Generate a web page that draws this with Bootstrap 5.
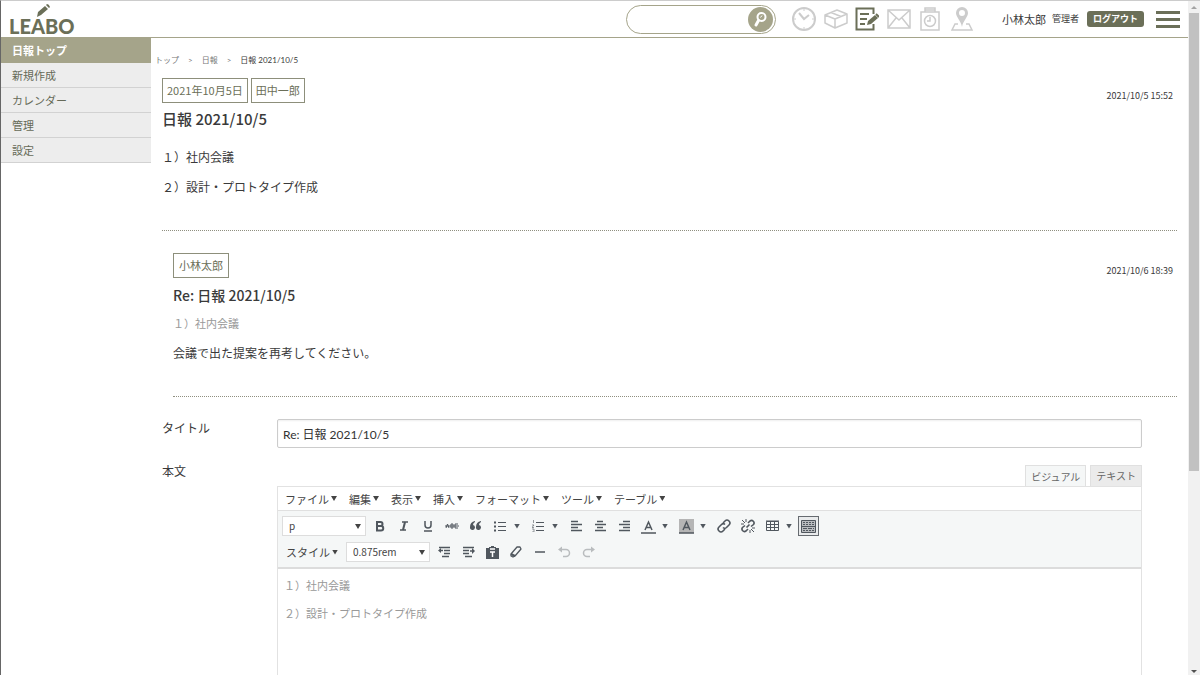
<!DOCTYPE html>
<html lang="ja">
<head>
<meta charset="utf-8">
<meta name="viewport" content="width=device-width, initial-scale=1">
<title>LEABO 日報</title>
<link href="https://cdn.jsdelivr.net/npm/bootstrap@5.3.0/dist/css/bootstrap.min.css" rel="stylesheet">
<style>
:root{--olive:#6b6f58;--sand:#a5a48a;--ink:#3a3a3a;--tool:#50575e}
body{font-family:"Noto Sans CJK JP",sans-serif;font-size:12px;line-height:18px;color:var(--ink);border-left:1px solid #666;border-top:1px solid #ccc}
svg{display:block}
.topbar{border-bottom:1px solid var(--sand);height:37px;padding:0 8px}
.brand{font:900 20px/20px Lato,sans-serif;color:var(--olive);position:relative;align-self:flex-end;padding-bottom:1px}
.brand svg{position:absolute;left:27px;top:-12px}
.searchbox{width:150px;height:29px;border:1px solid var(--sand);border-radius:15px;padding:0 2px 0 12px}
.searchbox input{min-width:0;border:0;outline:0;background:none}
.searchbox button{width:25px;height:25px;background:var(--sand);color:#fff}
.apps{width:182px;color:#ccc}
.apps .on{color:var(--olive)}
.apps a{color:inherit}
.username{font-size:11px;margin:0 6px 0 12px}
.role{font-size:9px}
.logout{font-size:9px;font-weight:700;line-height:16px;color:#fff;background:var(--olive);border-radius:3px;padding:0 6px}
.burger{margin-left:12px}
.burger span{display:block;width:24px;height:3px;background:var(--olive)}
.side{width:150px}
.side a{height:25px;line-height:24px;font-size:11px;padding-left:11px;color:#666a58;background:#ededed;border-bottom:1px solid #d2d2d2;text-decoration:none;display:block}
.side a.on{background:var(--sand);color:#fff;font-weight:700;border-color:var(--sand)}
.crumbs{font-family:Lato,"Noto Sans CJK JP",sans-serif;font-size:8px;line-height:16px;margin:14px 0 10px 4px;gap:9px}
.crumbs a,.crumbs .sep{color:#777;text-decoration:none}
.post{margin:-3px 11px 0;padding-bottom:22px;border-bottom:1px dotted #8f8f80}
.reply{margin:0 11px 22px 22px;padding-top:19px}
.chip{font-size:11px;line-height:23px;border:1px solid #8d8f7b;color:var(--olive);padding:0 5px}
.chips{gap:3px}
.chips .chip{padding:0 4px}
.stamp{font-size:9px;padding-right:4px}
.post h1{font-size:15px;line-height:22px;font-weight:500;margin:3px 0 18px}
.post h2{font-size:14px;line-height:22px;font-weight:500;margin:4px 0 8px}
.post p{margin:0 0 12px}
.post .quoted{font-size:11px;color:#999}
.field{margin-left:11px;margin-right:46px}
.field label,.field .lab{width:115px;flex:none}
.bodyrow{padding-top:14px}
.tabs-row{padding-top:3px;gap:4px}
.titlebox{font-family:Lato,"Noto Sans CJK JP",sans-serif;font-size:12px;line-height:18px;height:29px;padding:0 5px;border:1px solid #ccc;border-radius:2px;color:#333;box-shadow:inset 0 1px 2px #0001}
.tabbtn{font-size:10px;line-height:20px;height:21px;padding:0 5px;color:#666;background:#ebebeb;border:1px solid #e0e0e0;border-bottom:0}
.tabbtn.on{background:#f5f7f7;height:22px;margin-bottom:-1px}
.editor{border:1px solid #e2e2e2;border-bottom:0}
.menus{height:23px;padding-left:7px;gap:12px}
.menus button,.stylebtn{font-size:11px;line-height:18px;color:#444;gap:2px}
.tools{background:#f5f7f7;border-top:1px solid #e0e0e0;border-bottom:2px solid #dcdcdc;padding:4px;gap:4px;color:var(--tool)}
.tools .row1 select{margin-right:2px}
.tools .row2 select{margin-right:2px}
.tools select{width:84px;height:20px;line-height:18px;font-size:10px;padding:0 6px;border:1px solid #ddd;border-radius:0;color:#444;background:#fff url("data:image/svg+xml,%3Csvg xmlns='http://www.w3.org/2000/svg' width='6' height='5'%3E%3Cpath d='M0 0h6L3 5z' fill='%23444'/%3E%3C/svg%3E") no-repeat right 4px center;appearance:none}
.tri{width:6px;height:5px;background:currentColor;clip-path:polygon(0 0,100% 0,50% 100%)}
.tool,.drop,.menus button,.stylebtn,.burger,.searchbox button,.logout{border:0}
.tool,.drop,.menus button,.stylebtn,.burger{background:none;padding:0}
.tool{width:24px;height:22px;color:inherit;display:flex;align-items:center;justify-content:center}
.drop{width:14px;height:22px;padding-left:2px;color:inherit;display:flex;align-items:center}
.tool.pressed{width:21px;height:20px;border:1px solid #666b70;background:#e9ebec}
.tool.off{color:#b9bcbe}
.doc{padding:7px 6px;font-size:11px;color:#999}
.doc p{margin:0 0 10px}
.scroller{width:12px;background:#f1f1f1;color:#555}
.scroller .thumb{height:68%;width:10px;background:#c1c1c1}
</style>
</head>
<body class="d-flex vh-100 overflow-hidden">
<div class="flex-grow-1 d-flex flex-column overflow-hidden">
<header class="topbar d-flex align-items-center flex-shrink-0">
  <a href="#" class="brand text-decoration-none me-auto">LEABO<svg width="14" height="13" viewBox="0 0 14 13"><path d="M1 13l1-5 7-6 3 3-7 6zM10 1l1-1q2 0 3 3l-1 1z" fill="currentColor"/></svg></a>
  <form class="searchbox d-flex align-items-center">
    <input type="search" aria-label="検索" class="flex-grow-1">
    <button type="button" aria-label="検索する" class="rounded-circle d-flex align-items-center justify-content-center flex-shrink-0 p-0"><svg width="16" height="17" viewBox="0 0 16 17" fill="none" stroke="currentColor"><circle cx="9.500" cy="6" r="4" stroke-width="2"/><path d="M6.500 9.500L4 14" stroke-width="3" stroke-linecap="round"/><path d="M8.500 6.500l1.500-2"/></svg></button>
  </form>
  <nav class="apps d-flex justify-content-between align-items-center mx-3" aria-label="アプリ">
    <a href="#" aria-label="時計"><svg width="24" height="24" viewBox="0 0 24 24" fill="none" stroke="currentColor" stroke-width="2"><circle cx="12" cy="12" r="11"/><path d="M7 6l5 6 5-4"/><path d="M12 2v2M12 20v2M2 12h2M20 12h2" stroke-width="1"/></svg></a>
    <a href="#" aria-label="箱"><svg width="24" height="24" viewBox="0 0 24 24" fill="none" stroke="currentColor" stroke-width="1.500" stroke-linejoin="round"><path d="M1 8l12-5 10 4v9l-12 5-10-5zM1 8l10 4 12-5M11 12v9M7 5.500l10 4"/></svg></a>
    <a href="#" aria-label="日報" class="on"><svg width="24" height="24" viewBox="0 0 24 24" fill="none" stroke="currentColor" stroke-width="2"><path d="M18.500 7V1.500h-17v21h17V17M5 7h9M5 12h7M5 17h5"/><path d="M12 18l1-4 7-6 3 3-7 6z" fill="currentColor" stroke="none"/><path d="M21 7l3 3"/></svg></a>
    <a href="#" aria-label="メール"><svg width="24" height="24" viewBox="0 0 24 24" fill="none" stroke="currentColor" stroke-width="1.500"><path d="M1 3h22v18H1zM1 3l11 10L23 3M1 21l8-10M23 21l-8-10"/></svg></a>
    <a href="#" aria-label="タイムカード"><svg width="24" height="24" viewBox="0 0 24 24" fill="none" stroke="currentColor" stroke-width="1.500"><path d="M3 5h18v18H3zM7 5V1h10v4M7 3h10"/><circle cx="12" cy="14" r="5.500"/><path d="M12 10v4H9"/></svg></a>
    <a href="#" aria-label="地図"><svg width="24" height="24" viewBox="0 0 24 24" fill="none" stroke="currentColor" stroke-width="1.500"><path d="M8 17H5l-3 6h20l-3-6h-3"/><path fill="currentColor" stroke="none" fill-rule="evenodd" d="M12 0a6 6 0 0 1 6 6c0 4-5 8-6 14-1-6-6-10-6-14a6 6 0 0 1 6-6zm0 3a3 3 0 1 0 0 6 3 3 0 0 0 0-6z"/></svg></a>
  </nav>
  <span class="username">小林太郎</span>
  <span class="role me-2">管理者</span>
  <button type="button" class="logout">ログアウト</button>
  <button type="button" class="burger d-flex flex-column gap-1" aria-label="メニュー"><span></span><span></span><span></span></button>
</header>
<div class="d-flex flex-grow-1 overflow-hidden">
  <nav class="side flex-shrink-0">
    <a href="#" class="on">日報トップ</a><a href="#">新規作成</a><a href="#">カレンダー</a><a href="#">管理</a><a href="#">設定</a>
  </nav>
  <main class="flex-grow-1 d-flex flex-column overflow-hidden">
    <nav class="crumbs d-flex" aria-label="パンくず"><a href="#">トップ</a><span class="sep">&gt;</span><a href="#">日報</a><span class="sep">&gt;</span><span>日報 2021/10/5</span></nav>
    <article class="post">
      <div class="chips d-flex align-items-center">
        <span class="chip">2021年10月5日</span><span class="chip">田中一郎</span>
        <time class="stamp ms-auto mt-2 pt-1">2021/10/5 15:52</time>
      </div>
      <h1>日報 2021/10/5</h1>
      <div><p>１）社内会議</p><p>２）設計・プロトタイプ作成</p></div>
    </article>
    <article class="post reply">
      <div class="d-flex align-items-center">
        <span class="chip">小林太郎</span>
        <time class="stamp ms-auto mt-2 pt-1">2021/10/6 18:39</time>
      </div>
      <h2>Re: 日報 2021/10/5</h2>
      <div><p class="quoted">１）社内会議</p><p>会議で出た提案を再考してください。</p></div>
    </article>
    <div class="field d-flex">
      <label for="ttl">タイトル</label>
      <input id="ttl" type="text" class="titlebox flex-grow-1" value="Re: 日報 2021/10/5">
    </div>
    <div class="field bodyrow d-flex flex-grow-1">
      <span class="lab">本文</span>
      <div class="flex-grow-1 d-flex flex-column">
        <div class="tabs-row d-flex justify-content-end"><button type="button" class="tabbtn on">ビジュアル</button><button type="button" class="tabbtn">テキスト</button></div>
        <div class="editor flex-grow-1">
          <div class="menus d-flex align-items-center">
            <button type="button" class="d-flex align-items-center">ファイル<i class="tri"></i></button>
            <button type="button" class="d-flex align-items-center">編集<i class="tri"></i></button>
            <button type="button" class="d-flex align-items-center">表示<i class="tri"></i></button>
            <button type="button" class="d-flex align-items-center">挿入<i class="tri"></i></button>
            <button type="button" class="d-flex align-items-center">フォーマット<i class="tri"></i></button>
            <button type="button" class="d-flex align-items-center">ツール<i class="tri"></i></button>
            <button type="button" class="d-flex align-items-center">テーブル<i class="tri"></i></button>
          </div>
          <div class="tools d-flex flex-column">
            <div class="row1 d-flex align-items-center">
              <select aria-label="ブロック"><option>p</option></select>
              <button type="button" class="tool" aria-label="太字"><svg width="12" height="12" viewBox="0 0 12 12" fill="none" stroke="currentColor" stroke-width="2"><path d="M3 2h3.500a2 2 0 0 1 0 4H3h4a2 2 0 0 1 0 4.500H3z"/></svg></button>
              <button type="button" class="tool" aria-label="斜体"><svg width="12" height="12" viewBox="0 0 12 12" fill="none" stroke="currentColor" stroke-width="1.500"><path d="M4 2h6M2 10h6"/><path d="M7 2L5 10" stroke-width="2"/></svg></button>
              <button type="button" class="tool" aria-label="下線"><svg width="12" height="12" viewBox="0 0 12 12" fill="none" stroke="currentColor" stroke-width="1.500"><path d="M3 1v4a3 3 0 0 0 6 0V1M2 11h8"/></svg></button>
              <button type="button" class="tool" aria-label="取り消し線"><svg width="14" height="12" viewBox="0 0 14 12" fill="none" stroke="currentColor"><path d="M1 8l1.500-4L4 8M6 4v4h2V4zM13 4h-3v4h3M0 6h14"/></svg></button>
              <button type="button" class="tool" aria-label="引用"><svg width="12" height="10" viewBox="0 0 12 10" fill="currentColor"><path d="M5 0Q0 1 0 6a2.500 2.500 0 1 0 3-2q0-2 2-3zm6 0Q6 1 6 6a2.500 2.500 0 1 0 3-2q0-2 2-3z"/></svg></button>
              <button type="button" class="tool" aria-label="箇条書き"><svg width="12" height="12" viewBox="0 0 12 12" stroke="currentColor"><path d="M4 2.500h8M4 6.500h8M4 10.500h8"/><path d="M0 2.500h2M0 6.500h2M0 10.500h2" stroke-width="2"/></svg></button>
              <button type="button" class="drop" aria-label="箇条書きの種類"><i class="tri"></i></button>
              <button type="button" class="tool" aria-label="番号付き"><svg width="12" height="12" viewBox="0 0 12 12" fill="none" stroke="currentColor"><path d="M4 2.500h8M4 6.500h8M4 10.500h8"/><path d="M1.500 0v3M0 5h2L0 7.500h2M0 9h2v3H0" stroke-width=".6"/></svg></button>
              <button type="button" class="drop" aria-label="番号の種類"><i class="tri"></i></button>
              <button type="button" class="tool" aria-label="左寄せ"><svg width="12" height="12" viewBox="0 0 12 12" stroke="currentColor" stroke-width="1.500"><path d="M1 1.500h7M1 4.500h11M1 7.500h7M1 10.500h11"/></svg></button>
              <button type="button" class="tool" aria-label="中央寄せ"><svg width="12" height="12" viewBox="0 0 12 12" stroke="currentColor" stroke-width="1.500"><path d="M3 1.500h6M1 4.500h11M3 7.500h6M1 10.500h11"/></svg></button>
              <button type="button" class="tool" aria-label="右寄せ"><svg width="12" height="12" viewBox="0 0 12 12" stroke="currentColor" stroke-width="1.500"><path d="M5 1.500h7M1 4.500h11M5 7.500h7M1 10.500h11"/></svg></button>
              <button type="button" class="tool" aria-label="文字色"><svg width="15" height="15" viewBox="0 0 15 15" fill="none" stroke="currentColor" stroke-width="1.500"><path d="M4 11l3.500-8L11 11M5.500 8.500h4M0 14h15"/></svg></button>
              <button type="button" class="drop" aria-label="文字色を選ぶ"><i class="tri"></i></button>
              <button type="button" class="tool" aria-label="背景色"><svg width="15" height="15" viewBox="0 0 15 15" fill="none" stroke="currentColor" stroke-width="1.500"><path d="M0 0h15v14H0z" fill="#b5b5b5" stroke="none"/><path d="M4 11l3.500-8L11 11M5.500 8.500h4M0 14h15"/></svg></button>
              <button type="button" class="drop" aria-label="背景色を選ぶ"><i class="tri"></i></button>
              <button type="button" class="tool" aria-label="リンク"><svg width="14" height="14" viewBox="0 0 14 14" fill="none" stroke="currentColor" stroke-width="1.600"><path d="M6 4l2-2a2.800 2.800 0 0 1 4 4L9.500 8.500a2.600 2.600 0 0 1-3.500 0M8 10l-2 2a2.800 2.800 0 0 1-4-4l2.500-2.500a2.600 2.600 0 0 1 3.500 0"/></svg></button>
              <button type="button" class="tool" aria-label="リンク解除"><svg width="14" height="14" viewBox="0 0 14 14" fill="none" stroke="currentColor" stroke-width="1.600"><path d="M7 4l2-2a2.500 2.500 0 0 1 3.500 3.500L10 7.500M7 10l-2 2a2.500 2.500 0 0 1-3.500-3.500L4 6.500M5.500 8.500l3-3"/><path d="M1 1l3 3M5 0v3M0 5h3M13 13l-3-3M9 14v-3M14 9h-3" stroke-width="1"/></svg></button>
              <button type="button" class="tool" aria-label="表"><svg width="13" height="12" viewBox="0 0 13 12" fill="none" stroke="currentColor"><path d="M.5 1.500h12v9H.5zM.5 4.500h12M.5 7.500h12M4.500 1v10M8.500 1v10"/><path d="M0 1h13"/></svg></button>
              <button type="button" class="drop" aria-label="表の操作"><i class="tri"></i></button>
              <button type="button" class="tool pressed" aria-label="ツールバー切り替え"><svg width="15" height="13" viewBox="0 0 15 13" fill="none" stroke="currentColor"><path d="M.5.500h14v12H.5z" fill="#b9bcbf"/><path d="M2 2.500h11M2 4.500h11M2 10.500h11" stroke-dasharray="2 1"/><path d="M1 6.500h13"/><path d="M2 8.500h11" stroke-dasharray="4 1"/></svg></button>
            </div>
            <div class="row2 d-flex align-items-center">
              <button type="button" class="stylebtn d-flex align-items-center ms-1 me-2">スタイル<i class="tri"></i></button>
              <select aria-label="文字サイズ"><option>0.875rem</option></select>
              <button type="button" class="tool" aria-label="インデント解除"><svg width="13" height="12" viewBox="0 0 13 12" fill="none" stroke="currentColor" stroke-width="1.500"><path d="M1 1.500h11M6 4.500h6M6 7.500h6M4 10.500h7"/><path d="M0 4.500L3 2v5z" fill="currentColor" stroke="none"/><path d="M2 4.500h3"/></svg></button>
              <button type="button" class="tool" aria-label="インデント"><svg width="13" height="12" viewBox="0 0 13 12" fill="none" stroke="currentColor" stroke-width="1.500"><path d="M1 1.500h11M1 4.500h6M1 7.500h6M3 10.500h7"/><path d="M13 5l-3-3v6z" fill="currentColor" stroke="none"/><path d="M8 5h3"/></svg></button>
              <button type="button" class="tool" aria-label="テキストとして貼り付け"><svg width="13" height="13" viewBox="0 0 13 13" fill="currentColor"><path d="M0 2h3V1h2V0h3v1h2v1h3v11H0z"/><path d="M4 3h5M4 6h5M6.500 6v5" stroke="#fff" stroke-width="1.500"/></svg></button>
              <button type="button" class="tool" aria-label="書式クリア"><svg width="12" height="12" viewBox="0 0 12 12" fill="none" stroke="currentColor" stroke-width="1.300" stroke-linejoin="round"><path d="M1 8l6-7h3l1 2-6 7-2 1-2-1z"/><path d="M1 8l4 2" stroke-width="2"/></svg></button>
              <button type="button" class="tool" aria-label="水平線"><svg width="12" height="12" viewBox="0 0 12 12" stroke="currentColor" stroke-width="1.500"><path d="M1 6h10"/></svg></button>
              <button type="button" class="tool off" aria-label="元に戻す"><svg width="13" height="12" viewBox="0 0 13 12" fill="none" stroke="currentColor" stroke-width="1.500"><path d="M2 3.500h6a3.500 3.500 0 0 1 0 7H5"/><path d="M0 3.500L4 .5v6z" fill="currentColor" stroke="none"/></svg></button>
              <button type="button" class="tool off" aria-label="やり直し"><svg width="13" height="12" viewBox="0 0 13 12" fill="none" stroke="currentColor" stroke-width="1.500"><path d="M11 3.500H5a3.500 3.500 0 0 0 0 7h3"/><path d="M13 3.500L9 .5v6z" fill="currentColor" stroke="none"/></svg></button>
            </div>
          </div>
          <div class="doc"><p>１）社内会議</p><p>２）設計・プロトタイプ作成</p></div>
        </div>
      </div>
    </div>
  </main>
</div>
</div>
<div class="scroller flex-shrink-0 d-flex flex-column align-items-center" aria-hidden="true">
  <svg width="12" height="12" viewBox="0 0 12 12" class="flex-shrink-0"><path d="M3 8h6L6 5z" fill="#a3a3a3"/></svg>
  <div class="thumb flex-shrink-0"></div>
  <svg width="12" height="8" viewBox="0 0 12 8" class="mt-auto flex-shrink-0"><path d="M3 3h6L6 6z" fill="#505050"/></svg>
</div>
<script src="https://cdn.jsdelivr.net/npm/bootstrap@5.3.0/dist/js/bootstrap.bundle.min.js"></script>
</body>
</html>
